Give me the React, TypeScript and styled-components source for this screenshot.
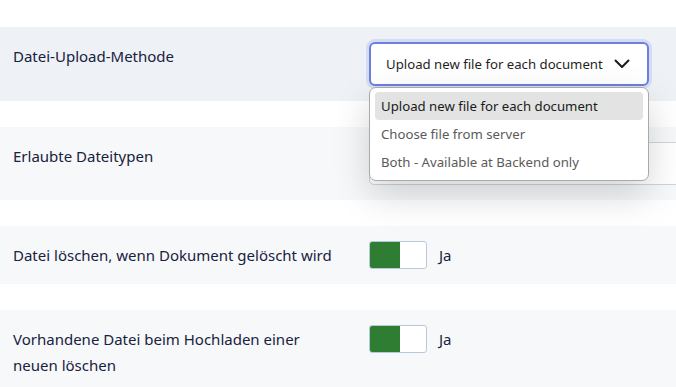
import styled, { createGlobalStyle } from "styled-components";

const GlobalStyle = createGlobalStyle`
    html, body {
        margin: 0;
        padding: 0;
        background: #ffffff;
    }
    body {
        font-family: "Noto Sans", "Open Sans", Arial, sans-serif;
        color: #1b2743;
        overflow: hidden;
    }
`;

const ChevronDown = () => (
    <svg width="16" height="10" viewBox="0 0 16 10" fill="none">
        <path d="M1.5 1.5 L8 8 L14.5 1.5" stroke="#1a1a1a" strokeWidth="2" strokeLinecap="round" strokeLinejoin="round" />
    </svg>
);

const options = [
    "Upload new file for each document",
    "Choose file from server",
    "Both - Available at Backend only",
];

const App = () => {
    return (
        <>
            <GlobalStyle />
            <Page>
                <Row $tone="active">
                    <Label>Datei-Upload-Methode</Label>
                    <Control>
                        <SelectBox>
                            <span>{options[0]}</span>
                            <ChevronDown />
                        </SelectBox>
                        <Menu>
                            {options.map((o, i) => (
                                <MenuItem key={o} $selected={i === 0}>{o}</MenuItem>
                            ))}
                        </Menu>
                    </Control>
                </Row>
                <Row>
                    <Label>Erlaubte Dateitypen</Label>
                    <Control>
                        <TextInput />
                    </Control>
                </Row>
                <Row>
                    <Label>Datei löschen, wenn Dokument gelöscht wird</Label>
                    <Control>
                        <ToggleWrap>
                            <Toggle><span /></Toggle>
                            <ToggleText>Ja</ToggleText>
                        </ToggleWrap>
                    </Control>
                </Row>
                <Row>
                    <Label>Vorhandene Datei beim Hochladen einer neuen löschen</Label>
                    <Control>
                        <ToggleWrap>
                            <Toggle><span /></Toggle>
                            <ToggleText>Ja</ToggleText>
                        </ToggleWrap>
                    </Control>
                </Row>
            </Page>
        </>
    );
};

export default App;

const Page = styled.div`
    display: flex;
    flex-direction: column;
    gap: 26px;
    padding-top: 27px;
    width: 676px;
`;

const Row = styled.div<{ $tone?: "active" }>`
    display: grid;
    grid-template-columns: 330px 1fr;
    column-gap: 26px;
    align-items: start;
    padding: 15px 0 15px 13px;
    background: ${(p) => (p.$tone === "active" ? "#eef1f6" : "#f7f8fa")};
`;

const Label = styled.div`
    font-size: 15px;
    line-height: 26px;
    padding-top: 1px;
    color: #17223f;
`;

const Control = styled.div`
    position: relative;
    min-height: 28px;
`;

const SelectBox = styled.div`
    box-sizing: border-box;
    width: 280px;
    height: 44px;
    display: flex;
    align-items: center;
    justify-content: space-between;
    padding: 0 17px 0 15px;
    border: 2px solid #6b7fe3;
    border-radius: 6px;
    box-shadow: 0 0 0 3px rgba(107, 127, 227, 0.18);
    background: #ffffff;
    font-size: 13.2px;
    color: #1f1f1f;
    white-space: nowrap;
`;

const Menu = styled.div`
    position: absolute;
    z-index: 2;
    top: 45px;
    left: 0;
    box-sizing: border-box;
    width: 280px;
    padding: 4px 5px;
    background: #ffffff;
    border: 1px solid #a9a9a9;
    border-radius: 7px;
    box-shadow: 0 14px 36px rgba(0, 0, 0, 0.17);
    display: flex;
    flex-direction: column;
`;

const MenuItem = styled.div<{ $selected?: boolean }>`
    height: 28px;
    line-height: 28px;
    padding: 0 6px;
    border-radius: 4px;
    font-size: 13.2px;
    color: ${(p) => (p.$selected ? "#1a1a1a" : "#5a5a5a")};
    background: ${(p) => (p.$selected ? "#e3e3e3" : "transparent")};
    white-space: nowrap;
`;

const TextInput = styled.div`
    box-sizing: border-box;
    height: 43px;
    width: 330px;
    border: 1px solid #cdd5df;
    border-radius: 5px;
    background: #ffffff;
`;

const ToggleWrap = styled.div`
    display: flex;
    align-items: center;
    gap: 12px;
`;

const Toggle = styled.div`
    box-sizing: border-box;
    width: 58px;
    height: 28px;
    border: 1px solid #b9c9dc;
    border-radius: 3px;
    background: #ffffff;
    overflow: hidden;
    display: flex;

    & span {
        width: 30px;
        height: 100%;
        background: #2e7d32;
    }
`;

const ToggleText = styled.span`
    font-size: 15px;
    color: #17223f;
`;
